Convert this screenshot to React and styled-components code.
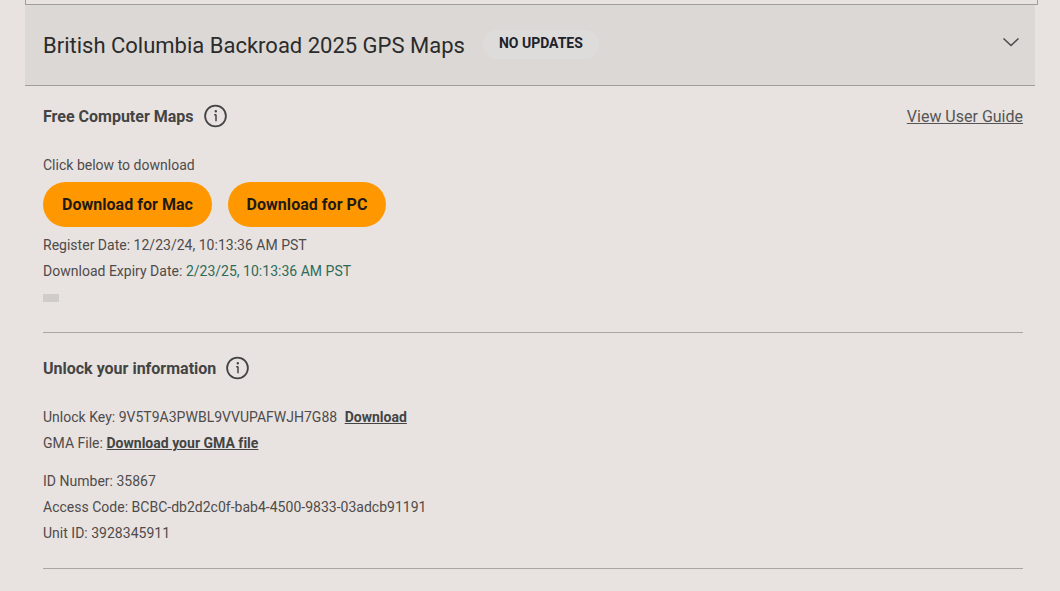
import React from 'react'
import styled, { createGlobalStyle } from 'styled-components'

const GlobalStyle = createGlobalStyle`
  html, body {
    margin: 0;
    padding: 0;
    background: #e8e3e0;
    font-family: Roboto, "Liberation Sans", sans-serif;
    overflow: hidden;
  }
`

const Wrapper = styled.div`
  width: 1060px;
  height: 591px;
  padding: 0 25px 0;
  box-sizing: border-box;
`

const TopEdge = styled.div`
  height: 4px;
  border: 1px solid #a19d9b;
  border-top: 0;
  margin-right: -3px;
  box-sizing: content-box;
`

const Header = styled.div`
  display: flex;
  align-items: center;
  height: 80px;
  padding: 0 15px 0 18px;
  background: #dcd8d5;
  border-bottom: 1px solid #a19d9b;
`

const HeaderTitle = styled.h2`
  margin: 0;
  font-size: 22px;
  font-weight: 400;
  color: #2b2b2b;
`

const Badge = styled.span`
  display: block;
  width: 116px;
  height: 29px;
  margin-left: 18px;
  margin-top: -2px;
  padding-left: 16px;
  box-sizing: border-box;
  line-height: 27px;
  border-radius: 15px;
  background: #dddcdb;
  font-size: 14px;
  font-weight: 700;
  color: #20222a;
`

const Chevron = styled.svg`
  margin-left: auto;
  margin-top: -6px;
  width: 18px;
  height: 12px;
  fill: none;
  stroke: #4a4a4a;
  stroke-width: 1.5;
`

const Body = styled.div`
  padding: 0 12px 0 18px;
`

const Section = styled.section`
  border-bottom: 1px solid #a8a5a3;
  height: ${p => p.$height}px;
  box-sizing: border-box;
`

const SectionHead = styled.div`
  display: flex;
  align-items: center;
  height: 22px;
  padding-top: ${p => p.$top}px;
`

const SectionTitle = styled.h3`
  margin: 0;
  font-size: 16px;
  font-weight: 700;
  color: #444;
`

const InfoIcon = styled.svg`
  margin-left: 10px;
  width: 24px;
  height: 24px;
  fill: none;
  stroke: #444;
`

const GuideLink = styled.a`
  margin-left: auto;
  font-size: 16px;
  color: #555;
  text-decoration: underline;
`

const Line = styled.p`
  margin: 0;
  font-size: 14px;
  line-height: 26px;
  letter-spacing: 0.012px;
  color: #4f4b4b;
`

const Hint = styled(Line)`
  margin-top: 26px;
  line-height: 24px;
`

const Buttons = styled.div`
  display: flex;
  gap: 16px;
  margin: 5px 0 5px;
`

const OrangeButton = styled.button`
  width: ${p => p.$width}px;
  height: 45px;
  padding: 0;
  border: 0;
  border-radius: 23px;
  background: #ff9800;
  font-family: inherit;
  font-size: 16px;
  font-weight: 700;
  letter-spacing: 0.03px;
  color: #1f1a14;
`

const Expiry = styled.span`
  color: #2e6b57;
`

const Placeholder = styled.div`
  width: 16px;
  height: 8px;
  margin-top: 10px;
  background: #cfccc9;
`

const TextLink = styled.a`
  font-weight: 700;
  color: #444;
  text-decoration: underline;
  margin-left: ${p => p.$gap || 0}px;
`

const Group = styled.div`
  margin-top: ${p => p.$top}px;
`

const Info = () => (
  <InfoIcon viewBox="0 0 24 24">
    <circle cx="11.5" cy="12" r="10.4" strokeWidth="1.8" />
    <path d="M12 10.6v6.6M10.2 10.8H12" strokeWidth="1.5" />
    <circle cx="11.8" cy="7.2" r="0.7" strokeWidth="1.1" />
  </InfoIcon>
)

const App = () => (
  <Wrapper>
    <GlobalStyle />
    <TopEdge />
    <Header>
      <HeaderTitle>British Columbia Backroad 2025 GPS Maps</HeaderTitle>
      <Badge>NO UPDATES</Badge>
      <Chevron viewBox="0 0 18 12">
        <path d="M1.5 2.5 9 9.5l7.5-7" />
      </Chevron>
    </Header>
    <Body>
      <Section $height={247}>
        <SectionHead $top={19}>
          <SectionTitle>Free Computer Maps</SectionTitle>
          <Info />
          <GuideLink>View User Guide</GuideLink>
        </SectionHead>
        <Hint>Click below to download</Hint>
        <Buttons>
          <OrangeButton $width={169}>Download for Mac</OrangeButton>
          <OrangeButton $width={158}>Download for PC</OrangeButton>
        </Buttons>
        <Line>Register Date: 12/23/24, 10:13:36 AM PST</Line>
        <Line>Download Expiry Date: <Expiry>2/23/25, 10:13:36 AM PST</Expiry></Line>
        <Placeholder />
      </Section>
      <Section $height={236}>
        <SectionHead $top={24}>
          <SectionTitle>Unlock your information</SectionTitle>
          <Info />
        </SectionHead>
        <Group $top={25}>
          <Line>Unlock Key: 9V5T9A3PWBL9VVUPAFWJH7G88 <TextLink $gap={4}>Download</TextLink></Line>
          <Line>GMA File: <TextLink>Download your GMA file</TextLink></Line>
        </Group>
        <Group $top={12}>
          <Line>ID Number: 35867</Line>
          <Line>Access Code: BCBC-db2d2c0f-bab4-4500-9833-03adcb91191</Line>
          <Line>Unit ID: 3928345911</Line>
        </Group>
      </Section>
    </Body>
  </Wrapper>
)

export default App
